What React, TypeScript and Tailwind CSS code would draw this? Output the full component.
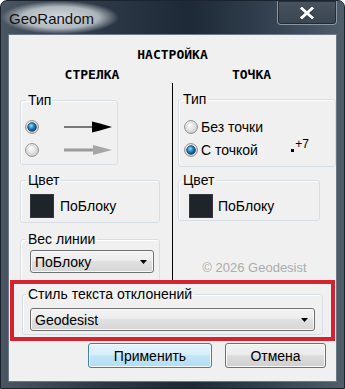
import React from "react";

function Radio({ id, checked }: { id: string; checked?: boolean }) {
  return (
    <svg width="14" height="14" viewBox="0 0 14 14" className="shrink-0">
      <defs>
        <radialGradient id={`${id}-bg`} cx="0.35" cy="0.3" r="0.8">
          <stop offset="0" stopColor="#ffffff" />
          <stop offset="1" stopColor="#cfcfcf" />
        </radialGradient>
        <radialGradient id={`${id}-dot`} cx="0.4" cy="0.35" r="0.7">
          <stop offset="0" stopColor="#9fe0ff" />
          <stop offset="0.45" stopColor="#2b88c2" />
          <stop offset="1" stopColor="#0a3a66" />
        </radialGradient>
      </defs>
      <circle cx="7" cy="7" r="6.4" fill={`url(#${id}-bg)`} stroke="#8a8c8e" />
      {checked ? (
        <circle cx="7" cy="7" r="4.3" fill={`url(#${id}-dot)`} stroke="#17466f" strokeWidth="0.9" />
      ) : (
        <circle cx="7" cy="7" r="4.3" fill="none" stroke="#d8d8d8" />
      )}
    </svg>
  );
}

function Group({
  label,
  className,
  legendClass,
  bodyClass,
  children,
}: {
  label: string;
  className: string;
  legendClass: string;
  bodyClass: string;
  children: React.ReactNode;
}) {
  return (
    <fieldset
      className={`rounded-[3px] border border-[#d5dfe5] shadow-[inset_1px_1px_0_#ffffff] ${className}`}
    >
      <legend className={`px-[2px] leading-[16px] ${legendClass}`}>{label}</legend>
      <div className={bodyClass}>{children}</div>
    </fieldset>
  );
}

function Combo({ value, className }: { value: string; className: string }) {
  return (
    <div
      className={`flex h-[23px] items-center justify-between rounded-[3px] border border-[#707070] bg-[linear-gradient(#f3f3f3,#ececec_50%,#e0e0e0_50%,#d6d6d6)] pl-[4px] pr-[6px] shadow-[inset_0_0_0_1px_#f8f8f8] ${className}`}
    >
      <span className="leading-[16px]">{value}</span>
      <svg width="7" height="4" viewBox="0 0 7 4">
        <polygon points="0,0 7,0 3.5,4" fill="#000" />
      </svg>
    </div>
  );
}

function Swatch() {
  return <div className="h-[24px] w-[24px] shrink-0 border border-[#333840] bg-[#1f232a]" />;
}

export default function App() {
  return (
    <div className="flex h-[389px] w-[345px] flex-col overflow-hidden rounded-t-[7px] border border-[#1a232e] bg-[linear-gradient(90deg,#4a5562,#2c3846_30%,#1d2936_55%,#334150_78%,#505d6b)] font-['Liberation_Sans',Arial,sans-serif] text-[14px] text-black">
      {/* title bar */}
      <div className="flex h-[33px] shrink-0 items-start justify-between">
        <div className="h-full w-[118px] bg-[radial-gradient(closest-side,rgba(220,226,230,0.95),rgba(205,212,217,0.8)_65%,rgba(200,207,212,0))] pl-[8px] pt-[8px]">
          <span className="text-[15px] leading-[20px] text-[#111]">GeoRandom</span>
        </div>
        <div className="mr-[7px] flex h-[24px] w-[60px] items-center justify-center rounded-b-[4px] border border-t-0 border-[#8c96a2] bg-[linear-gradient(#48535f,#3a4552)] shadow-[inset_0_0_0_1px_rgba(0,0,0,0.4)]">
          <svg width="14" height="12" viewBox="0 0 14 12">
            <path d="M2 1.5 L12 10.5 M12 1.5 L2 10.5" stroke="#2a333d" strokeWidth="4.4" strokeLinecap="square" />
            <path d="M2 1.5 L12 10.5 M12 1.5 L2 10.5" stroke="#ffffff" strokeWidth="3" strokeLinecap="square" />
          </svg>
        </div>
      </div>

      {/* client area */}
      <div className="mx-[7px] flex h-[348px] shrink-0 flex-col border border-[#6b7886] bg-[#f0f0f0]">
        <div className="pt-[12px] text-center font-['DejaVu_Sans_Mono',monospace] text-[13px] font-bold leading-[16px]">
          НАСТРОЙКА
        </div>
        <div className="mt-[4px] flex font-['DejaVu_Sans_Mono',monospace] text-[13px] font-bold leading-[16px]">
          <div className="w-[163px] pl-[3px] text-center">СТРЕЛКА</div>
          <div className="flex-1 pr-[5px] text-center">ТОЧКА</div>
        </div>

        <div className="flex h-[197px] overflow-hidden">
          {/* left column */}
          <div className="flex w-[163px] flex-col">
            <Group label="Тип" className="ml-[11px] mt-[9px] w-[98px]" legendClass="ml-[5px]" bodyClass="pb-[3px] pl-[4px] pt-[7px]">
              <div className="flex h-[23px] items-center">
                <Radio id="ra" checked />
                <svg width="48" height="12" viewBox="0 0 48 12" className="ml-[25px]">
                  <line x1="0" y1="6" x2="30" y2="6" stroke="#000" strokeWidth="1" />
                  <polygon points="28,0.5 36,2.5 48,6 36,9.5 28,11.5" fill="#000" />
                </svg>
              </div>
              <div className="flex h-[23px] items-center">
                <Radio id="rb" />
                <svg width="48" height="12" viewBox="0 0 48 12" className="ml-[25px]">
                  <line x1="0" y1="6" x2="31" y2="6" stroke="#9b9b9b" strokeWidth="3" />
                  <polygon points="29,1 48,6 29,11" fill="#a6a6a6" />
                </svg>
              </div>
            </Group>

            <Group label="Цвет" className="ml-[11px] mt-[7px] w-[140px]" legendClass="ml-[5px]" bodyClass="pb-[4px] pl-[9px] pt-[6px]">
              <div className="flex items-center gap-[6px]">
                <Swatch />
                <span className="leading-[16px]">ПоБлоку</span>
              </div>
            </Group>

            <Group label="Вес линии" className="ml-[11px] mt-[8px] w-[140px]" legendClass="ml-[5px]" bodyClass="pb-[8px] pl-[9px] pt-[3px]">
              <Combo value="ПоБлоку" className="w-[124px]" />
            </Group>
          </div>

          {/* right column */}
          <div className="flex flex-1 flex-col border-l border-black">
            <Group label="Тип" className="ml-[5px] mt-[8px]" legendClass="ml-[2px]" bodyClass="pb-[5px] pl-[5px] pt-[8px]">
              <div className="flex h-[23px] items-center">
                <Radio id="rc" />
                <span className="ml-[3px] leading-[16px]">Без точки</span>
              </div>
              <div className="flex h-[23px] items-center">
                <Radio id="rd" checked />
                <span className="ml-[3px] leading-[16px]">С точкой</span>
                <span className="ml-auto mr-[26px] mt-[1px] flex h-[14px] items-end gap-[1px] self-start">
                  <span className="mb-[1px] h-[3px] w-[3px] bg-black" />
                  <span className="self-start text-[12px] leading-[10px]">+7</span>
                </span>
              </div>
            </Group>

            <Group label="Цвет" className="ml-[5px] mt-[5px] w-[142px]" legendClass="ml-[2px]" bodyClass="pb-[2px] pl-[10px] pt-[6px]">
              <div className="flex items-center gap-[5px]">
                <Swatch />
                <span className="leading-[16px]">ПоБлоку</span>
              </div>
            </Group>

            <div className="mt-[39px] text-center text-[13px] leading-[16px] text-[#acacac]">
              © 2026 Geodesist
            </div>
          </div>
        </div>

        {/* highlighted section */}
        <div className="mx-[1px] border-[4px] border-[#d4232f] pb-[2px]">
          <Group label="Стиль текста отклонений" className="mx-[8px] mt-[2px]" legendClass="ml-[3px]" bodyClass="pb-[3px] pl-[7px] pr-[7px] pt-[6px]">
            <Combo value="Geodesist" className="w-full" />
          </Group>
        </div>

        <div className="mr-[10px] mt-[2px] flex justify-end gap-[13px]">
          <div className="flex h-[25px] w-[124px] items-center justify-center rounded-[3px] border border-[#3c7fb1] bg-[linear-gradient(#e5f4fc,#d6eefb_50%,#c2e6fa_50%,#b3dcf4)] shadow-[inset_0_0_0_1px_#f4fbff] leading-[16px]">
            Применить
          </div>
          <div className="flex h-[25px] w-[101px] items-center justify-center rounded-[3px] border border-[#707070] bg-[linear-gradient(#f2f2f2,#ebebeb_50%,#dddddd_50%,#cfcfcf)] shadow-[inset_0_0_0_1px_#fafafa] leading-[16px]">
            Отмена
          </div>
        </div>
      </div>
    </div>
  );
}
